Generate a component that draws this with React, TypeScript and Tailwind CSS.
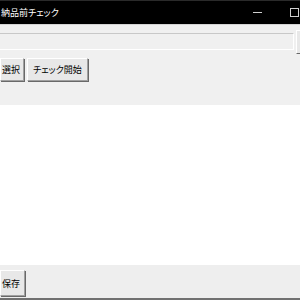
import React from 'react';

const Btn: React.FC<{ label: string; className?: string }> = ({ label, className = '' }) => (
  <button
    className={`shrink-0 bg-[#e8e8e8] border border-t-white border-l-white border-r-[#a0a0a0] border-b-[#a0a0a0] shadow-[1px_1px_0_#696969] text-[9px] text-black leading-none [font-feature-settings:'palt'] ${className}`}
  >
    {label}
  </button>
);

export default function App() {
  return (
    <div
      className="w-[300px] h-[300px] overflow-hidden flex flex-col bg-[#f0f0f0]"
      style={{ fontFamily: '"Noto Sans CJK JP", "Liberation Sans", sans-serif' }}
    >
      {/* title bar */}
      <div className="h-[24px] shrink-0 bg-black border-t border-t-[#2a2a2a] flex items-center">
        <span className="text-white text-[9px] ml-px [font-feature-settings:'palt']">納品前チェック</span>
        <div className="ml-auto flex items-center">
          <span className="block w-[9px] h-px bg-[#cfcfcf] mr-[28px]"></span>
          <span className="block w-[9px] h-[9px] border border-[#cfcfcf] mr-px"></span>
        </div>
      </div>
      <div className="h-px bg-[#d4d4d4] shrink-0"></div>

      {/* path row */}
      <div className="flex items-start pt-[5px] shrink-0">
        <div className="shrink-0 ml-[-10px] mt-[3px] w-[304px] h-[17px] border border-t-[#c8c8c8] border-l-[#c8c8c8] border-r-white border-b-white bg-[#f0f0f0]"></div>
        <div className="shrink-0 ml-[2px] w-[20px] h-[24px] bg-[#e8e8e8] border border-t-white border-l-white border-r-[#a0a0a0] border-b-[#696969]"></div>
      </div>

      {/* buttons */}
      <div className="flex items-start gap-[3px] mt-[4px] shrink-0">
        <Btn label="選択" className="h-[23px] pl-px pr-[3px]" />
        <Btn label="チェック開始" className="h-[23px] px-[5px]" />
      </div>

      {/* result area */}
      <div className="mt-[24px] h-[160px] bg-white shrink-0"></div>

      {/* footer */}
      <div className="flex-1 bg-[#eeeeee] flex items-start pt-[5px]">
        <Btn label="保存" className="h-[26px] pl-px pr-[4px]" />
      </div>
      <div className="h-[2px] bg-[#707070] shrink-0"></div>
    </div>
  );
}
